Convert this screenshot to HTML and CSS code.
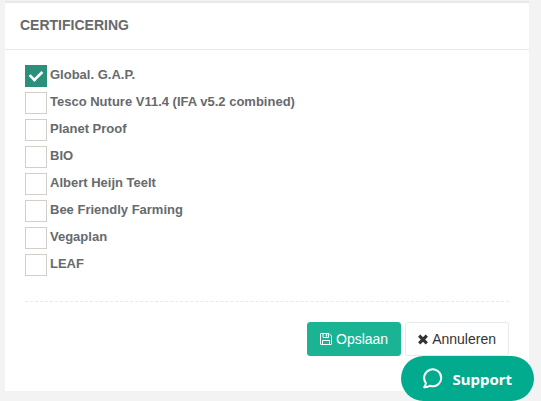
FILE: index.html
```html
<!DOCTYPE html>
<html lang="nl">
<head>
    <meta charset="UTF-8">
    <meta name="viewport" content="width=device-width, initial-scale=1.0">
    <title>Certificering</title>
    <link rel="stylesheet" href="styles.css">
</head>
<body>
    <form class="ibox">
        <header class="ibox-title">
            <h5>CERTIFICERING</h5>
        </header>

        <div class="ibox-content">
            <ul class="check-list">
                <li><input type="checkbox" id="globalgap" checked><label for="globalgap">Global. G.A.P.</label></li>
                <li><input type="checkbox" id="tesco"><label for="tesco">Tesco Nuture V11.4 (IFA v5.2 combined)</label></li>
                <li><input type="checkbox" id="planetproof"><label for="planetproof">Planet Proof</label></li>
                <li><input type="checkbox" id="bio"><label for="bio">BIO</label></li>
                <li><input type="checkbox" id="albertheijn"><label for="albertheijn">Albert Heijn Teelt</label></li>
                <li><input type="checkbox" id="beefriendly"><label for="beefriendly">Bee Friendly Farming</label></li>
                <li><input type="checkbox" id="vegaplan"><label for="vegaplan">Vegaplan</label></li>
                <li><input type="checkbox" id="leaf"><label for="leaf">LEAF</label></li>
            </ul>

            <hr class="line-dashed">

            <div class="actions">
                <button type="submit" class="btn btn-primary">
                    <svg width="12" height="12" viewBox="0 0 12 12" fill="none" stroke="currentColor" aria-hidden="true">
                        <path d="M.5 1Q.5.5 1 .5H9L11.500 3V11Q11.500 11.500 11 11.500H1Q.5 11.500.5 11Z"/>
                        <path d="M3 .5V4.500H8.500V.5M2.500 11.500V7.500H9.500V11.500"/>
                        <path d="M6.500 1V3.500" stroke-width="1.500"/>
                    </svg>
                    Opslaan
                </button>
                <button type="button" class="btn btn-white">
                    <svg width="10" height="12" viewBox="0 0 10 12" fill="none" stroke="currentColor" stroke-width="3.200" aria-hidden="true">
                        <path d="M1.200 2.700L8.800 10.300M8.800 2.700L1.200 10.300"/>
                    </svg>
                    Annuleren
                </button>
            </div>
        </div>
    </form>

    <button type="button" class="support">
        <svg width="20" height="21" viewBox="0 0 20 21" fill="none" stroke="currentColor" stroke-width="2" stroke-linejoin="round" aria-hidden="true">
            <path d="M2.800 14.800A8.500 8.500 0 1 1 6.800 17.800C5.200 19 3.300 19.500 1.200 19.300C2.400 18 2.900 16.500 2.800 14.800Z"/>
        </svg>
        Support
    </button>
</body>
</html>
```

FILE: styles.css
```css
* {
    box-sizing: border-box;
}

body {
    font-family: "Liberation Sans", Arial, sans-serif;
    font-size: 13px;
    margin: 0;
    padding: 1px 12px 10px 5px;
    background-color: #f3f3f4;
    color: #676a6c;
}

/* Panel */
.ibox {
    background-color: white;
    border-top: 2px solid #e7eaec;
}

.ibox-title {
    padding: 13px 15px 15px;
    border-bottom: 1px solid #e7eaec;
}

.ibox-title h5 {
    margin: 0;
    font-size: 14px;
    line-height: 18px;
}

.ibox-content {
    padding: 15px 20px 35px;
}

/* Checkboxes */
.check-list {
    list-style: none;
    margin: 0;
    padding: 0;
    display: grid;
    gap: 5px;
}

.check-list li {
    display: flex;
    align-items: flex-start;
    gap: 3px;
}

.check-list input {
    appearance: none;
    width: 22px;
    height: 22px;
    margin: 0;
    border: 1px solid #d2cec8;
    background-color: white;
}

.check-list input:checked {
    display: grid;
    place-items: center;
    border-color: #2b8f7b;
    background-color: #2b8f7b;
}

.check-list input:checked::before {
    content: "";
    width: 11px;
    height: 6px;
    margin-bottom: 4px;
    border: solid white;
    border-width: 0 0 3px 3px;
    rotate: -45deg;
    scale: 0.9;
}

.check-list label {
    font-weight: bold;
    line-height: 19px;
}

.line-dashed {
    margin: 25px 0 20px;
    border: 0;
    border-top: 1px dashed #e7eaec;
}

/* Buttons */
.actions {
    display: flex;
    justify-content: flex-end;
    gap: 4px;
}

.btn {
    display: flex;
    align-items: center;
    gap: 4px;
    padding: 6px 12px;
    border: 1px solid;
    border-radius: 3px;
    font-family: inherit;
    font-size: 14px;
    line-height: 20px;
    cursor: pointer;
}

.btn-primary {
    background-color: #1ab394;
    border-color: #1ab394;
    color: white;
}

.btn-white {
    background-color: white;
    border-color: #e7eaec;
    color: #333;
}

/* Support widget */
.support {
    position: fixed;
    right: 7px;
    bottom: 0;
    display: flex;
    align-items: center;
    gap: 9px;
    height: 45px;
    padding: 0 22px;
    border: 0;
    border-radius: 23px;
    background-color: #03ab8e;
    color: white;
    font-family: "Noto Sans", "Open Sans", sans-serif;
    font-size: 15px;
    font-weight: bold;
    cursor: pointer;
}
```
